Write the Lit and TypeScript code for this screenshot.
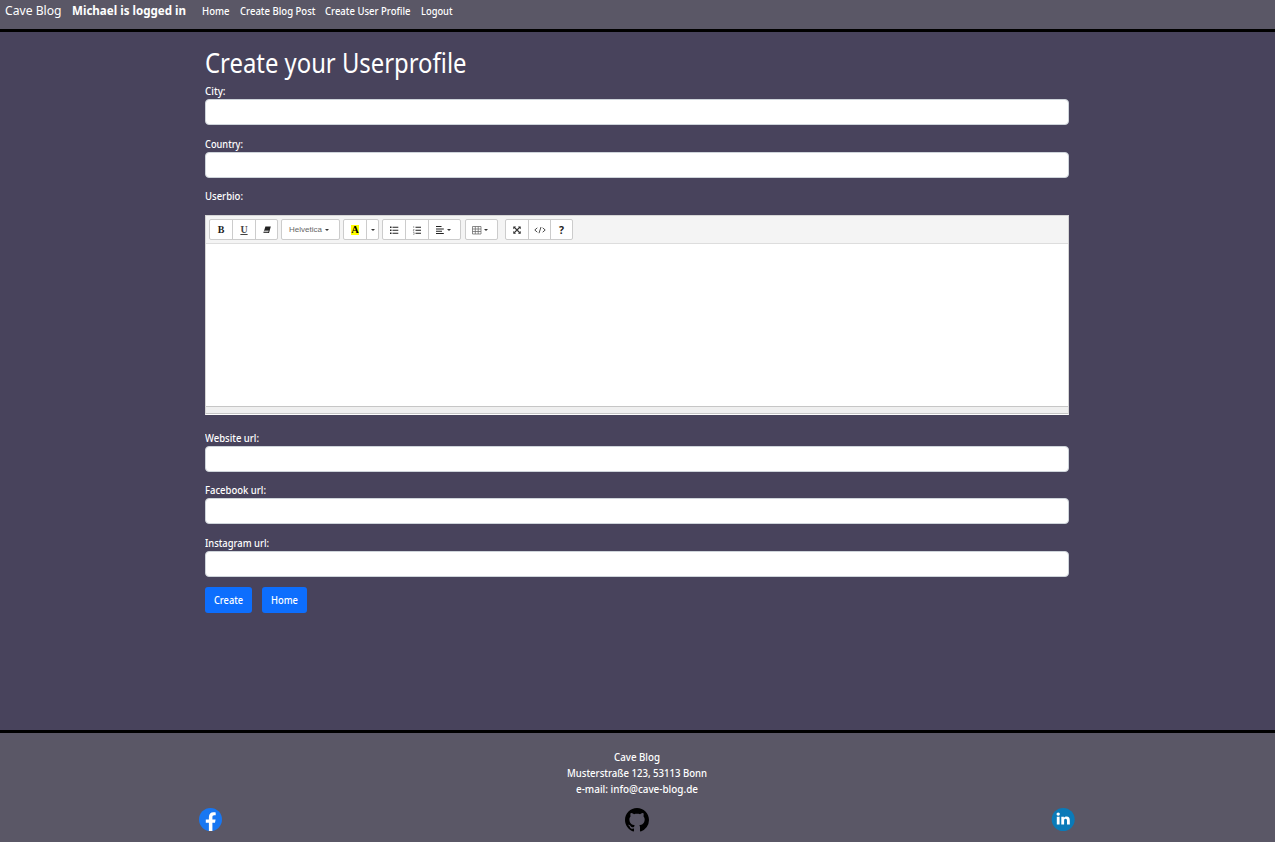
import { LitElement, html, svg, css } from "lit";
import { customElement, property } from "lit/decorators.js";

/** A line of text condensed horizontally to a given width. */
@customElement("fit-text")
class FitText extends LitElement {
  @property({ type: Number }) w = 0;
  @property() text = "";
  static styles = css`
    :host { display: inline-block; white-space: nowrap; text-align: left; vertical-align: top; }
    span { display: inline-block; transform-origin: 0 50%; }
  `;
  render() {
    return html`<span>${this.text}</span>`;
  }
  updated() {
    const s = this.renderRoot.querySelector("span") as HTMLElement;
    s.style.transform = "none";
    const natural = s.getBoundingClientRect().width;
    this.style.width = this.w + "px";
    if (natural) s.style.transform = `scaleX(${this.w / natural})`;
  }
}

const t = (text: string, w: number) => html`<fit-text .text=${text} .w=${w}></fit-text>`;

const caret = html`<i class="caret"></i>`;
const icon = (body: unknown, w = 10, h = 10) =>
  html`<svg width=${w} height=${h} viewBox="0 0 ${w} ${h}">${body}</svg>`;

const eraser = icon(svg`<path d="M3.4 1.5h5.4L7 8H1.4z" fill="#222"/><path d="M2.4 5.5h4.4L6.2 7.3H1.8z" fill="#bbb"/>`);
const bullets = icon(svg`<path d="M1 1.5h1.5v1.5H1zM1 4.5h1.5V6H1zM1 7.5h1.5V9H1zM3.5 1.8H9.3v1H3.5zM3.5 4.8H9.3v1H3.5zM3.5 7.8H9.3v1H3.5z" fill="#222"/>`);
const numbers = icon(svg`<path d="M1.7 1v2M1 4.5h1.2L1 6h1.3M1 7.5h1.2v1.8H1" fill="none" stroke="#777" stroke-width=".6"/><path d="M3.5 1.8H9v1H3.5zM3.5 4.8H9v1H3.5zM3.5 7.8H9v1H3.5z" fill="#222"/>`);
const align = icon(svg`<path d="M1 1h5.5v1.1H1zM1 3.4h7.8v1.1H1zM1 5.7h6v1.1H1zM1 8h7.8v1.1H1z" fill="#222"/>`);
const grid = icon(svg`<path d="M.5 1.5h8.5v7.5H.5zM.5 4h8.5M.5 6.5h8.5M3.3 1.5v7.5M6.2 1.5v7.5" fill="none" stroke="#666" stroke-width=".75"/>`);
const expand = icon(svg`<path d="M2.5 2.5l5 5M7.5 2.5l-5 5" stroke="#333" stroke-width="1.1"/><path d="M1.3 1.5h2.7L1.3 4.2zM8.7 1.5v2.7L6 1.5zM1.3 8.7V6L4 8.7zM8.7 8.7H6L8.7 6z" fill="#222"/>`);
const code = icon(svg`<path d="M3.3 2.8L.8 5l2.5 2.2M8.7 2.8L11.2 5 8.7 7.2M7 2L5 8.2" fill="none" stroke="#444" stroke-width=".95"/>`, 12, 10);

@customElement("app-root")
class AppRoot extends LitElement {
  static styles = css`
    :host {
      display: flex; flex-direction: column; height: 842px; box-sizing: border-box;
      background: #48435c; color: #fff;
      font: 500 10.67px/16px "Noto Sans", "Open Sans", sans-serif;
    }
    * { box-sizing: border-box; }
    header { flex: none; display: flex; height: 32px; padding-left: 5px; background: #5a5766; border-bottom: 3px solid #000; line-height: 22px; }
    .brand { font-size: 13.2px; font-weight: 400; margin-right: 10.5px; line-height: 21px; }
    .user { font-size: 13px; font-weight: 700; margin-right: 16.4px; line-height: 21px; }
    nav { display: flex; gap: 10px; }
    main { flex: 1; width: 864px; margin-left: 205px; padding-top: 15px; }
    h1 { margin: 0; font-size: 26.4px; font-weight: 400; line-height: 32px; height: 36px; }
    .field { height: 42px; margin-bottom: 10.6px; }
    .label { height: 16px; }
    input { display: block; width: 100%; height: 26px; border: 1px solid #ced4da; border-radius: 4px; background: #fff; padding: 0 8px; }
    .editor { display: flex; flex-direction: column; height: 200px; margin: 11px 0 14.6px; background: #fff; border: 1px solid #d5d5d5; border-bottom-color: #fff; }
    .toolbar { display: flex; height: 28px; padding: 3px; background: #f4f4f4; border-bottom: 1px solid #ddd; }
    .edit { flex: 1; }
    .status { height: 8px; background: #efefef; border-top: 1px solid #c6c6c6; border-bottom: 1px solid #c6c6c6; }
    .group { display: flex; height: 21px; margin-right: 3px; border: 1px solid #ccc; border-radius: 2px; background: #fff; color: #222; }
    .group.table { margin: 0 7px 0 1px; }
    .b { display: flex; align-items: center; justify-content: center; width: 23px; font: 700 10px "Liberation Serif", serif; }
    .b + .b { border-left: 1px solid #ccc; }
    .b.first, .b.end { width: 22px; }
    .b.font { width: 57px; padding-right: 3px; font: 8px "Liberation Sans", sans-serif; color: #666; }
    .b.drop { width: 12px; }
    .b.wide { width: 32px; padding-right: 4px; }
    .b.only { width: 31px; padding-right: 4px; }
    .b.q { width: 22px; font: 700 10.5px "Open Sans", sans-serif; }
    .b.mid { width: 22px; }
    .u { text-decoration: underline; text-decoration-thickness: .5px; font-weight: 700; color: #444; }
    .a { background: #ff0; color: #000; width: 8px; height: 10px; line-height: 10px; text-align: center; font-size: 10.5px; }
    .caret { border: 2px solid transparent; border-top-color: #333; border-bottom: 0; margin-left: 2px; }
    .font .caret { margin-left: 3px; }
    .drop .caret { margin: 0; }
    .actions { display: flex; gap: 10px; margin-top: -0.8px; }
    button { height: 26px; padding: 0 9px; border: 0; border-radius: 3px; background: #0d6efd; color: #fff; font: inherit; line-height: 26px; }
    footer { flex: none; height: 112px; padding-top: 16px; border-top: 3px solid #000; background: #5a5766; text-align: center; }
    .line { height: 16px; padding-right: 1px; }
    .social { display: flex; justify-content: space-between; width: 876px; margin: 10.5px 0 0 199px; }
    .social svg { display: block; }
  `;

  field(label: string, w: number) {
    return html`<div class="field"><div class="label">${t(label, w)}</div><input aria-label=${label} /></div>`;
  }

  render() {
    return html`
      <header>
        <div class="brand">${t("Cave Blog", 56.5)}</div>
        <div class="user">${t("Michael is logged in", 114)}</div>
        <nav>${t("Home", 27.5)}${t("Create Blog Post", 75.5)}${t("Create User Profile", 85.5)}${t("Logout", 31.5)}</nav>
      </header>
      <main>
        <h1>${t("Create your Userprofile", 261.5)}</h1>
        ${this.field("City:", 20.5)}
        ${this.field("Country:", 38)}
        <div class="label">${t("Userbio:", 38)}</div>
        <div class="editor">
          <div class="toolbar">
            <div class="group"><span class="b first">B</span><span class="b"><span class="u">U</span></span><span class="b end">${eraser}</span></div>
            <div class="group"><span class="b font">Helvetica${caret}</span></div>
            <div class="group"><span class="b first"><span class="a">A</span></span><span class="b drop">${caret}</span></div>
            <div class="group"><span class="b first">${bullets}</span><span class="b">${numbers}</span><span class="b wide">${align}${caret}</span></div>
            <div class="group table"><span class="b only">${grid}${caret}</span></div>
            <div class="group"><span class="b first">${expand}</span><span class="b mid">${code}</span><span class="b q">?</span></div>
          </div>
          <div class="edit"></div>
          <div class="status"></div>
        </div>
        ${this.field("Website url:", 54)}
        ${this.field("Facebook url:", 61)}
        ${this.field("Instagram url:", 64)}
        <div class="actions"><button>${t("Create", 29)}</button><button>${t("Home", 27)}</button></div>
      </main>
      <footer>
        <div class="line">${t("Cave Blog", 46)}</div>
        <div class="line">${t("Musterstraße 123, 53113 Bonn", 140)}</div>
        <div class="line">${t("e-mail: info@cave-blog.de", 122)}</div>
        <div class="social">
          <svg width="24" height="24" viewBox="0 0 24 24"><circle cx="11.5" cy="11.5" r="11.5" fill="#1877f2"/><path d="M9.9 22.9v-8.1H6.8v-3.4h3.1V8.9c0-3 1.8-4.7 4.5-4.7 1.3 0 2.3.2 2.3.2v2.9h-1.4c-1.5 0-1.9.9-1.9 1.9v2.2h3.2l-.6 3.4h-2.6v8.1z" fill="#fff"/></svg>
          <svg width="24" height="24" viewBox="0 0 16 16"><path d="M8 0C3.58 0 0 3.58 0 8c0 3.54 2.29 6.53 5.47 7.59.4.07.55-.17.55-.38 0-.19-.01-.82-.01-1.49-2.01.37-2.53-.49-2.69-.94-.09-.23-.48-.94-.82-1.13-.28-.15-.68-.52-.01-.53.63-.01 1.08.58 1.23.82.72 1.21 1.87.87 2.33.66.07-.52.28-.87.51-1.07-1.78-.2-3.64-.89-3.64-3.95 0-.87.31-1.59.82-2.15-.08-.2-.36-1.02.08-2.12 0 0 .67-.21 2.2.82.64-.18 1.32-.27 2-.27s1.36.09 2 .27c1.53-1.04 2.2-.82 2.2-.82.44 1.1.16 1.92.08 2.12.51.56.82 1.27.82 2.15 0 3.07-1.87 3.75-3.65 3.95.29.25.54.73.54 1.48 0 1.07-.01 1.93-.01 2.2 0 .21.15.46.55.38A8.01 8.01 0 0 0 16 8c0-4.42-3.58-8-8-8z" fill="#000"/></svg>
          <svg width="24" height="24" viewBox="0 0 24 24"><circle cx="12.2" cy="11.5" r="11.5" fill="#0a7ab8"/><path d="M5.8 8.8h2.8v7.8H5.8zM10.3 8.8h2.6v1.1c.4-.7 1.3-1.3 2.5-1.3 2.6 0 3.4 1.5 3.4 3.9v4.1h-2.8v-3.6c0-1.2-.2-2.2-1.4-2.2s-1.5.9-1.5 2.1v3.7h-2.8z" fill="#fff"/><circle cx="7.2" cy="6.1" r="1.7" fill="#fff"/></svg>
        </div>
      </footer>
    `;
  }
}
